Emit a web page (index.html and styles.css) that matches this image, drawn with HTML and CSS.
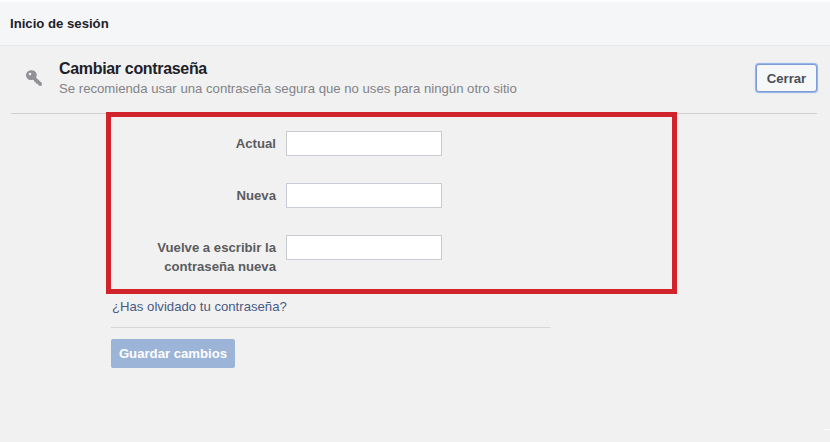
FILE: index.html
```html
<!DOCTYPE html>
<html lang="es">

<head>
    <meta charset="UTF-8">
    <meta name="viewport" content="width=device-width, initial-scale=1.0">
    <title>Inicio de sesión</title>
    <link rel="stylesheet" href="styles.css">
</head>

<body>
    <div class="title">Inicio de sesión</div>
    <div class="content">
        <div class="head">
            <svg class="key" viewBox="0 0 16 16">
                <path fill-rule="evenodd" d="M5 0.3a4.9 4.9 0 1 0 1.6 9.5l1.2 0.2 0.3 1.6 1.4 0.3 0.4 1.6 1.5 0.3 1.7 2 2.5 0.2 0.3-3.1-5.9-5.3A4.9 4.9 0 0 0 5 0.3zM4 2.8a1.3 1.3 0 1 1 0 2.6 1.3 1.3 0 0 1 0-2.6z" />
            </svg>
            <div class="text">
                <h1>Cambiar contraseña</h1>
                <p>Se recomienda usar una contraseña segura que no uses para ningún otro sitio</p>
            </div>
            <button class="close">Cerrar</button>
        </div>
        <form class="form">
            <div class="fields">
                <div class="row">
                    <label for="old">Actual</label>
                    <input type="password" id="old">
                </div>
                <div class="row">
                    <label for="new">Nueva</label>
                    <input type="password" id="new">
                </div>
                <div class="row">
                    <label for="confirm">Vuelve a escribir la contraseña nueva</label>
                    <input type="password" id="confirm">
                </div>
            </div>
            <a class="forgot" href="#">¿Has olvidado tu contraseña?</a>
            <div class="actions">
                <button class="save" type="button">Guardar cambios</button>
            </div>
        </form>
    </div>
    <div class="mark"></div>
</body>

</html>
```

FILE: styles.css
```css
* {
    box-sizing: border-box;
}

body {
    margin: 0;
    height: 442px;
    overflow: hidden;
    background-color: #f1f1f1;
    font-family: "Liberation Sans", Arial, sans-serif;
    font-size: 13.17px;
}

.title {
    height: 46px;
    padding-left: 10px;
    border-top: 2px solid #fdfdfe;
    border-bottom: 1px solid #e6e8ec;
    background-color: #f5f6f8;
    color: #1d2129;
    font-weight: bold;
    line-height: 43px;
}

.content {
    padding: 0 13px 0 11px;
}

.head {
    display: flex;
    height: 68px;
    border-bottom: 1px solid #cfcfcf;
}

.key {
    width: 16px;
    height: 16px;
    margin: 24px 17px 0 15px;
    fill: #909296;
}

.text {
    flex: 1;
    padding-top: 13px;
}

h1 {
    margin: 0;
    color: #1d2129;
    font-size: 16px;
    letter-spacing: -0.33px;
    line-height: 20px;
}

p {
    margin: 0;
    color: #828387;
    line-height: 20px;
}

button {
    border: none;
    font-family: inherit;
    font-size: 13.17px;
    font-weight: bold;
}

.close {
    width: 61px;
    height: 28px;
    margin-top: 18px;
    padding: 0;
    border: 1px solid #7c9cd6;
    border-radius: 3px;
    background-color: #f6f7f9;
    box-shadow: 0 0 1px 1px #8fb0ea;
    color: #4b4f56;
}

.form {
    width: 571px;
    margin: -2px 0 0 95px;
}

.fields {
    position: relative;
    height: 182px;
    padding-top: 14px;
    border: 5px solid #d2232d;
}

.row {
    display: flex;
    height: 52px;
}

label {
    width: 165px;
    padding: 3px 0 0 30px;
    color: #5b5c60;
    font-weight: bold;
    line-height: 19px;
    text-align: right;
}

input {
    width: 156px;
    height: 25px;
    margin-left: 10px;
    border: 1px solid #c8ccd3;
    background-color: #fff;
}

.forgot {
    display: block;
    padding-left: 6px;
    color: #485a83;
    line-height: 18px;
    margin-top: 4px;
    text-decoration: none;
}

.actions {
    width: 439px;
    margin: 11px 0 0 5px;
    padding-top: 11px;
    border-top: 1px solid #d6d6d6;
}

.save {
    width: 124px;
    height: 29px;
    padding: 0;
    border-radius: 2px;
    background-color: #9cb4d8;
    color: #fff;
}

.mark {
    position: absolute;
    right: 0;
    top: 429px;
    width: 6px;
    height: 1px;
    background-color: #fff;
}
```
